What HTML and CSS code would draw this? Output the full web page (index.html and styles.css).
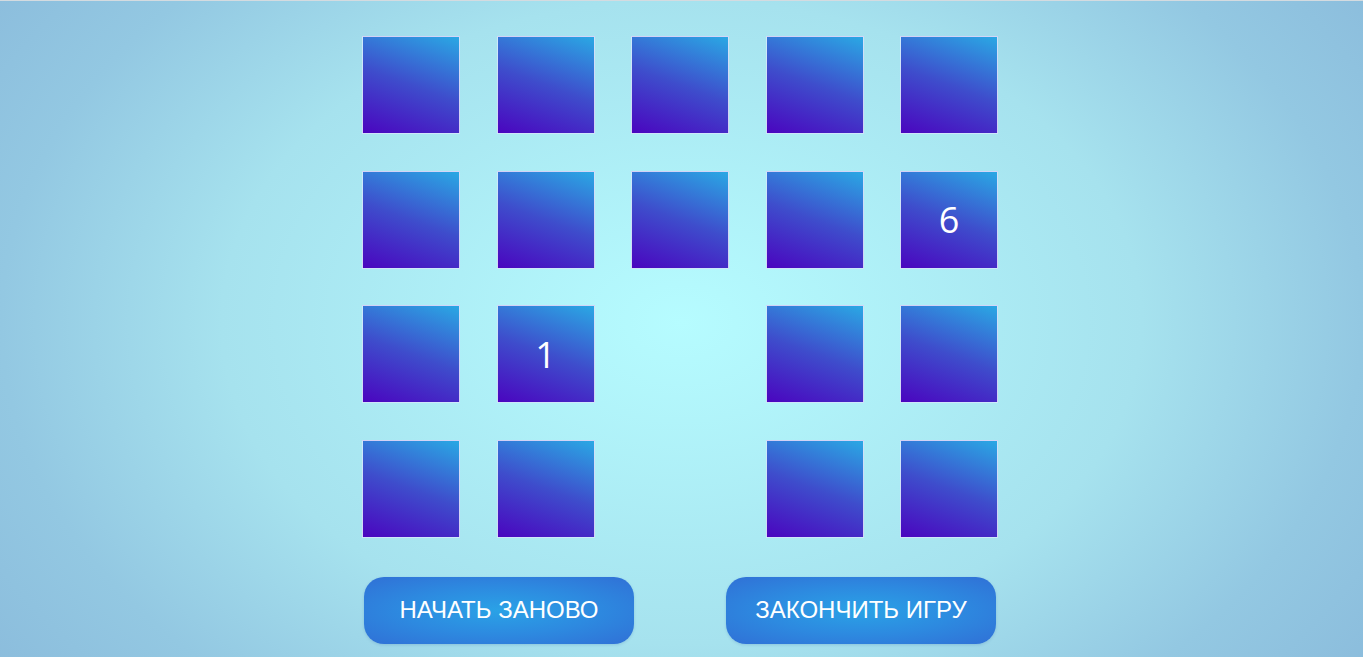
FILE: index.html
```html
<!DOCTYPE html>
<html lang="ru">
<head>
	<meta charset="utf-8">
	<title>Найди пару</title>
	<link rel="stylesheet" href="styles.css">
</head>
<body>
<div class="game">
	<!-- игровое поле 5 x 4 -->
	<div class="board">
		<div class="card"></div>
		<div class="card"></div>
		<div class="card"></div>
		<div class="card"></div>
		<div class="card"></div>

		<div class="card"></div>
		<div class="card"></div>
		<div class="card"></div>
		<div class="card"></div>
		<div class="card open">6</div>

		<div class="card"></div>
		<div class="card open">1</div>
		<div class="card gone"></div>
		<div class="card"></div>
		<div class="card"></div>

		<div class="card"></div>
		<div class="card"></div>
		<div class="card gone"></div>
		<div class="card"></div>
		<div class="card"></div>
	</div>
	<div class="controls">
		<button type="button" class="btn">Начать заново</button>
		<button type="button" class="btn">Закончить игру</button>
	</div>
</div>
</body>
</html>
```

FILE: styles.css
```css
html, body {
	height: 100%;
}
body {
	margin: 0;
	border-top: 1px solid #d4dbe0;
	box-sizing: border-box;
	background: radial-gradient(ellipse 1000px 700px at 50% 49%, #b6fcff 0%, #a6e2ee 46%, #93c8e2 68%, #8bbcdc 85%);
	font-family: "Open Sans", "Noto Sans", sans-serif;
}
.game {
	display: flex;
	flex-direction: column;
	align-items: center;
	padding-top: 35px;
	padding-right: 3px;
}
.board {
	display: grid;
	grid-template-columns: repeat(5, 98px);
	grid-auto-rows: 98px;
	gap: 36.5px;
}
.card {
	box-sizing: border-box;
	border: 1px solid rgba(235, 245, 255, 0.85);
	background: linear-gradient(20deg, #4a05bf 0%, #3e4dcc 50%, #2aa8e4 100%);
	color: #fff;
	font-size: 36px;
	display: flex;
	align-items: center;
	justify-content: center;
}
.card.gone {
	visibility: hidden;
}
.controls {
	display: flex;
	gap: 92px;
	margin-top: 39px;
}
.btn {
	width: 270px;
	height: 67px;
	border: none;
	border-radius: 20px;
	background: radial-gradient(ellipse at center, #2aa2e6 0%, #2d8ae0 50%, #3070d6 100%);
	color: #fff;
	font-family: "Liberation Sans", Arial, sans-serif;
	font-size: 24px;
	text-transform: uppercase;
	box-shadow: 0 1px 3px rgba(40, 90, 160, 0.2);
}
```
